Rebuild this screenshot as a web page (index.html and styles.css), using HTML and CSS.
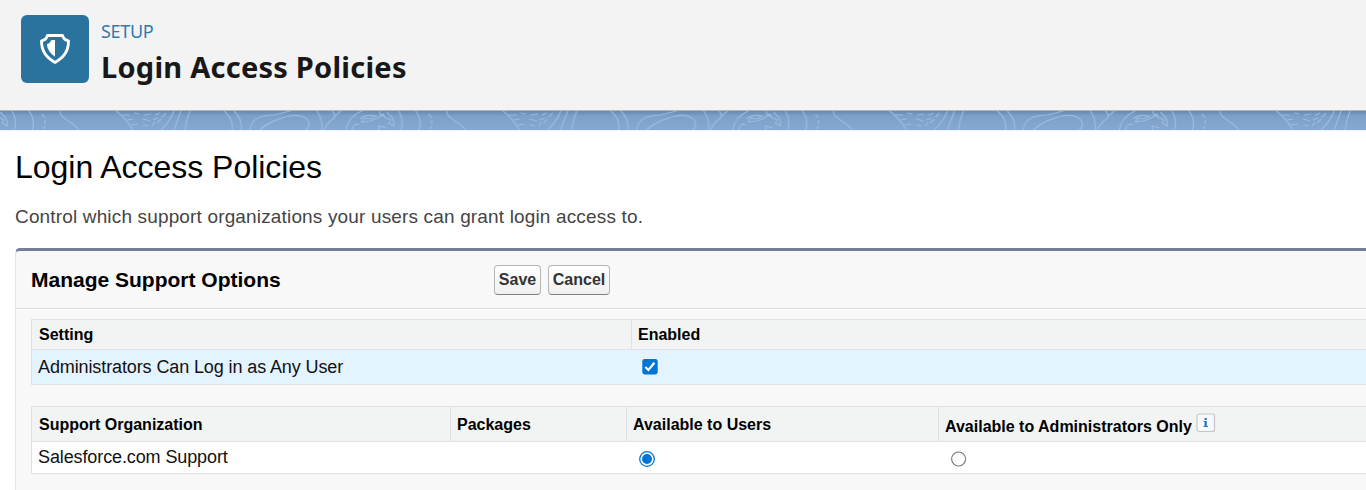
FILE: index.html
```html
<!DOCTYPE html>
<html lang="en">
<head>
<meta charset="utf-8">
<title>Login Access Policies</title>
<link rel="stylesheet" href="styles.css">
</head>
<body>
<header class="page-header">
  <div class="header-icon">
    <svg width="68" height="68" viewBox="0 0 68 68" fill="none">
      <path d="M26.5 20.5H41.5Q42.8 25 47.5 25.8Q47.8 40 34 47.4Q20.2 40 20.5 25.8Q25.2 25 26.5 20.5Z" stroke="#fff" stroke-width="2.8" stroke-linejoin="round"/>
      <path d="M34 25V41.8Q26.5 36.5 25.8 29.2Q29.3 28 30.5 25Z" fill="#fff"/>
    </svg>
  </div>
  <div class="header-text">
    <div class="eyebrow"><span>SETUP</span></div>
    <h1><span>Login Access Policies</span></h1>
  </div>
</header>
<div class="band">
  <svg width="1366" height="19">
    <defs>
      <pattern id="topo" width="386.7" height="19" patternUnits="userSpaceOnUse">
        <g fill="none" stroke="#a6c4e4" stroke-opacity=".72" stroke-width="1.2">
          <path d="M0 7L4 9L2 12L7 15V10L5 6L0 1M12 0Q18 10 14 19M29 0Q36 10 32 19"/>
          <path d="M42 3L45 7M45 9V13M45 15L43 18"/>
          <path d="M60 0C60 8 71 9 79 19M116 0Q125 6 133 19"/>
          <path d="M122 4H130M134 2L139 3M144 4L151 3M155 4L160 2M127 9L133 8M143 8L150 10M153 9L158 7M131 14L138 13M143 14L148 15M152 15L155 11M162 6L166 2M157 12L161 8"/>
          <path d="M174 0Q171 9 161 19M181 0L174 19M190 0Q186 10 185 19"/>
          <path d="M224 0Q234 8 232 19M234 0Q243 9 241 19"/>
          <path d="M250 19C251 7 262 4 274 4L290 0M260 19C268 11 278 8 289 5C299 3 309 6 309 14Q309 17 306 19"/>
          <path d="M317 0Q323 9 322 19M332 0Q336 3 334 7Q326 13 324 19M341 0L335 5"/>
          <path d="M346 19C348 8 354 3 362 0M352 19C353 14 356 12 359 14M380 0Q378 3 385 6"/>
          <path d="M360 8C364 3 371 4 376 5L370 8L364 7L362 11L370 10L378 7L383 3L386 8"/>
          <path d="M379 19V15L386 17"/>
        </g>
      </pattern>
    </defs>
    <rect width="1366" height="19" fill="url(#topo)"/>
  </svg>
</div>
<main>
  <h2><span>Login Access Policies</span></h2>
  <p class="intro"><span>Control which support organizations your users can grant login access to.</span></p>
  <section class="panel">
    <div class="panel-head">
      <h3><span>Manage Support Options</span></h3>
      <button class="save">Save</button>
      <button class="cancel">Cancel</button>
    </div>
    <div class="panel-body">
      <div class="grid settings">
        <div class="th"><span>Setting</span></div>
        <div class="th"><span>Enabled</span></div>
        <div class="td"><span>Administrators Can Log in as Any User</span></div>
        <div class="td control">
          <svg width="16" height="16" viewBox="0 0 16 16" role="img" aria-label="Enabled"><rect x=".3" width="15.4" height="15.4" rx="2.4" fill="#0075d5"/><path d="M3.3 8L6.4 11L12.4 3.8" fill="none" stroke="#fff" stroke-width="2.2"/></svg>
        </div>
      </div>
      <div class="grid orgs">
        <div class="th"><span>Support Organization</span></div>
        <div class="th"><span>Packages</span></div>
        <div class="th"><span>Available to Users</span></div>
        <div class="th admin"><span>Available to Administrators Only</span>
          <svg class="info" width="20" height="20" viewBox="0 0 20 20"><rect x="1" y="1" width="17.5" height="17.5" rx="2" fill="#f7f8fa" stroke="#c4c6c9" stroke-width="1.2"/><path d="M8.6 5h2.2v2H8.6zM7.7 8h3.1v5h1.2v1H7.5v-1h1.1V9h-.9z" fill="#1f73d8"/></svg>
        </div>
        <div class="td"><span>Salesforce.com Support</span></div>
        <div class="td"></div>
        <div class="td control">
          <svg width="16" height="16" viewBox="0 0 16 16"><circle cx="8" cy="8" r="7.3" fill="#fff" stroke="#0075d5" stroke-width="1.3"/><circle cx="8" cy="8" r="5" fill="#0075d5"/></svg>
        </div>
        <div class="td control">
          <svg width="16" height="16" viewBox="0 0 16 16"><circle cx="7.6" cy="8" r="7" fill="#fff" stroke="#767676" stroke-width="1.1"/></svg>
        </div>
      </div>
    </div>
  </section>
</main>
</body>
</html>
```
FILE: styles.css
```css
* { box-sizing: border-box; }
body { margin: 0; height: 490px; overflow: hidden; background: #fff; font-family: "Liberation Sans", Arial, sans-serif; color: #000; }
h1, h2, h3, p { margin: 0; white-space: nowrap; }
svg { display: block; flex: none; }

.page-header { display: flex; gap: 12px; height: 111px; padding: 15px 21px 0; background: #f3f3f3; border-bottom: 1px solid #b5b8ba; }
.header-icon { width: 68px; height: 68px; border-radius: 6px; background: #2a739e; }
.header-text { font-family: "Noto Sans", "Open Sans", sans-serif; }
.eyebrow { height: 33px; line-height: 32px; font-size: 18px; letter-spacing: -.3px; color: #2f7bb0; }
h1 { height: 38px; line-height: 38px; font-size: 29px; font-weight: 700; letter-spacing: .24px; color: #181818; }

.band { height: 20px; background: linear-gradient(#6689b0, #7da0ca 5px, #86a8d0 19px); border-bottom: 1px solid #eef1f5; }

main { padding-left: 15px; }
h2 { height: 71px; line-height: 72px; font-size: 32px; font-weight: 400; letter-spacing: -.03px; }
.intro { height: 46px; line-height: 30px; font-size: 19px; letter-spacing: .155px; color: #444; }

.panel { height: 260px; background: #f8f8f8; border-top: 3px solid #747e96; border-left: 1px solid #e3e4e6; border-radius: 5px 0 0 0; }
.panel-head { display: flex; align-items: center; height: 58px; padding-left: 15px; border-bottom: 1px solid #dadbdc; }
h3 { width: 463px; font-size: 21px; font-weight: 700; }
button { height: 30px; padding: 0; border: 1px solid #b5b5b5; border-bottom-color: #7f7f7f; border-radius: 4px; background: linear-gradient(#fff, #f0f0f0); font: bold 16px/26px "Liberation Sans", Arial, sans-serif; color: #333; }
.save { width: 47px; margin-right: 7px; }
.cancel { width: 62px; }

.panel-body { border-top: 1px solid #fff; padding: 9px 0 0 15px; }
.grid { display: grid; border: 1px solid #dfe2e4; border-right: 0; white-space: nowrap; }
.settings { height: 66px; grid-template-columns: 600px 1fr; grid-template-rows: 30px 34px; margin-bottom: 21px; }
.orgs { height: 68px; grid-template-columns: 419px 176px 312px 1fr; grid-template-rows: 35px 31px; }
.th { display: flex; align-items: center; padding-left: 7px; background: #f2f4f3; border-bottom: 1px solid #dfe2e4; font-size: 16px; font-weight: 700; }
.th + .th { padding-left: 6px; border-left: 1px solid #dfe2e4; margin-left: -1px; }
.td { display: flex; align-items: center; padding-left: 6px; background: #fff; font-size: 18px; letter-spacing: -.11px; color: #111; }
.settings .td { background: #e3f3ff; }
.td.control { padding-left: 10px; }
.orgs .th { padding-top: 2px; }
.orgs .control { padding: 3px 0 0 12px; }
.orgs .admin { gap: 4px; padding-top: 5px; }
.info { margin-top: -7px; }
```
